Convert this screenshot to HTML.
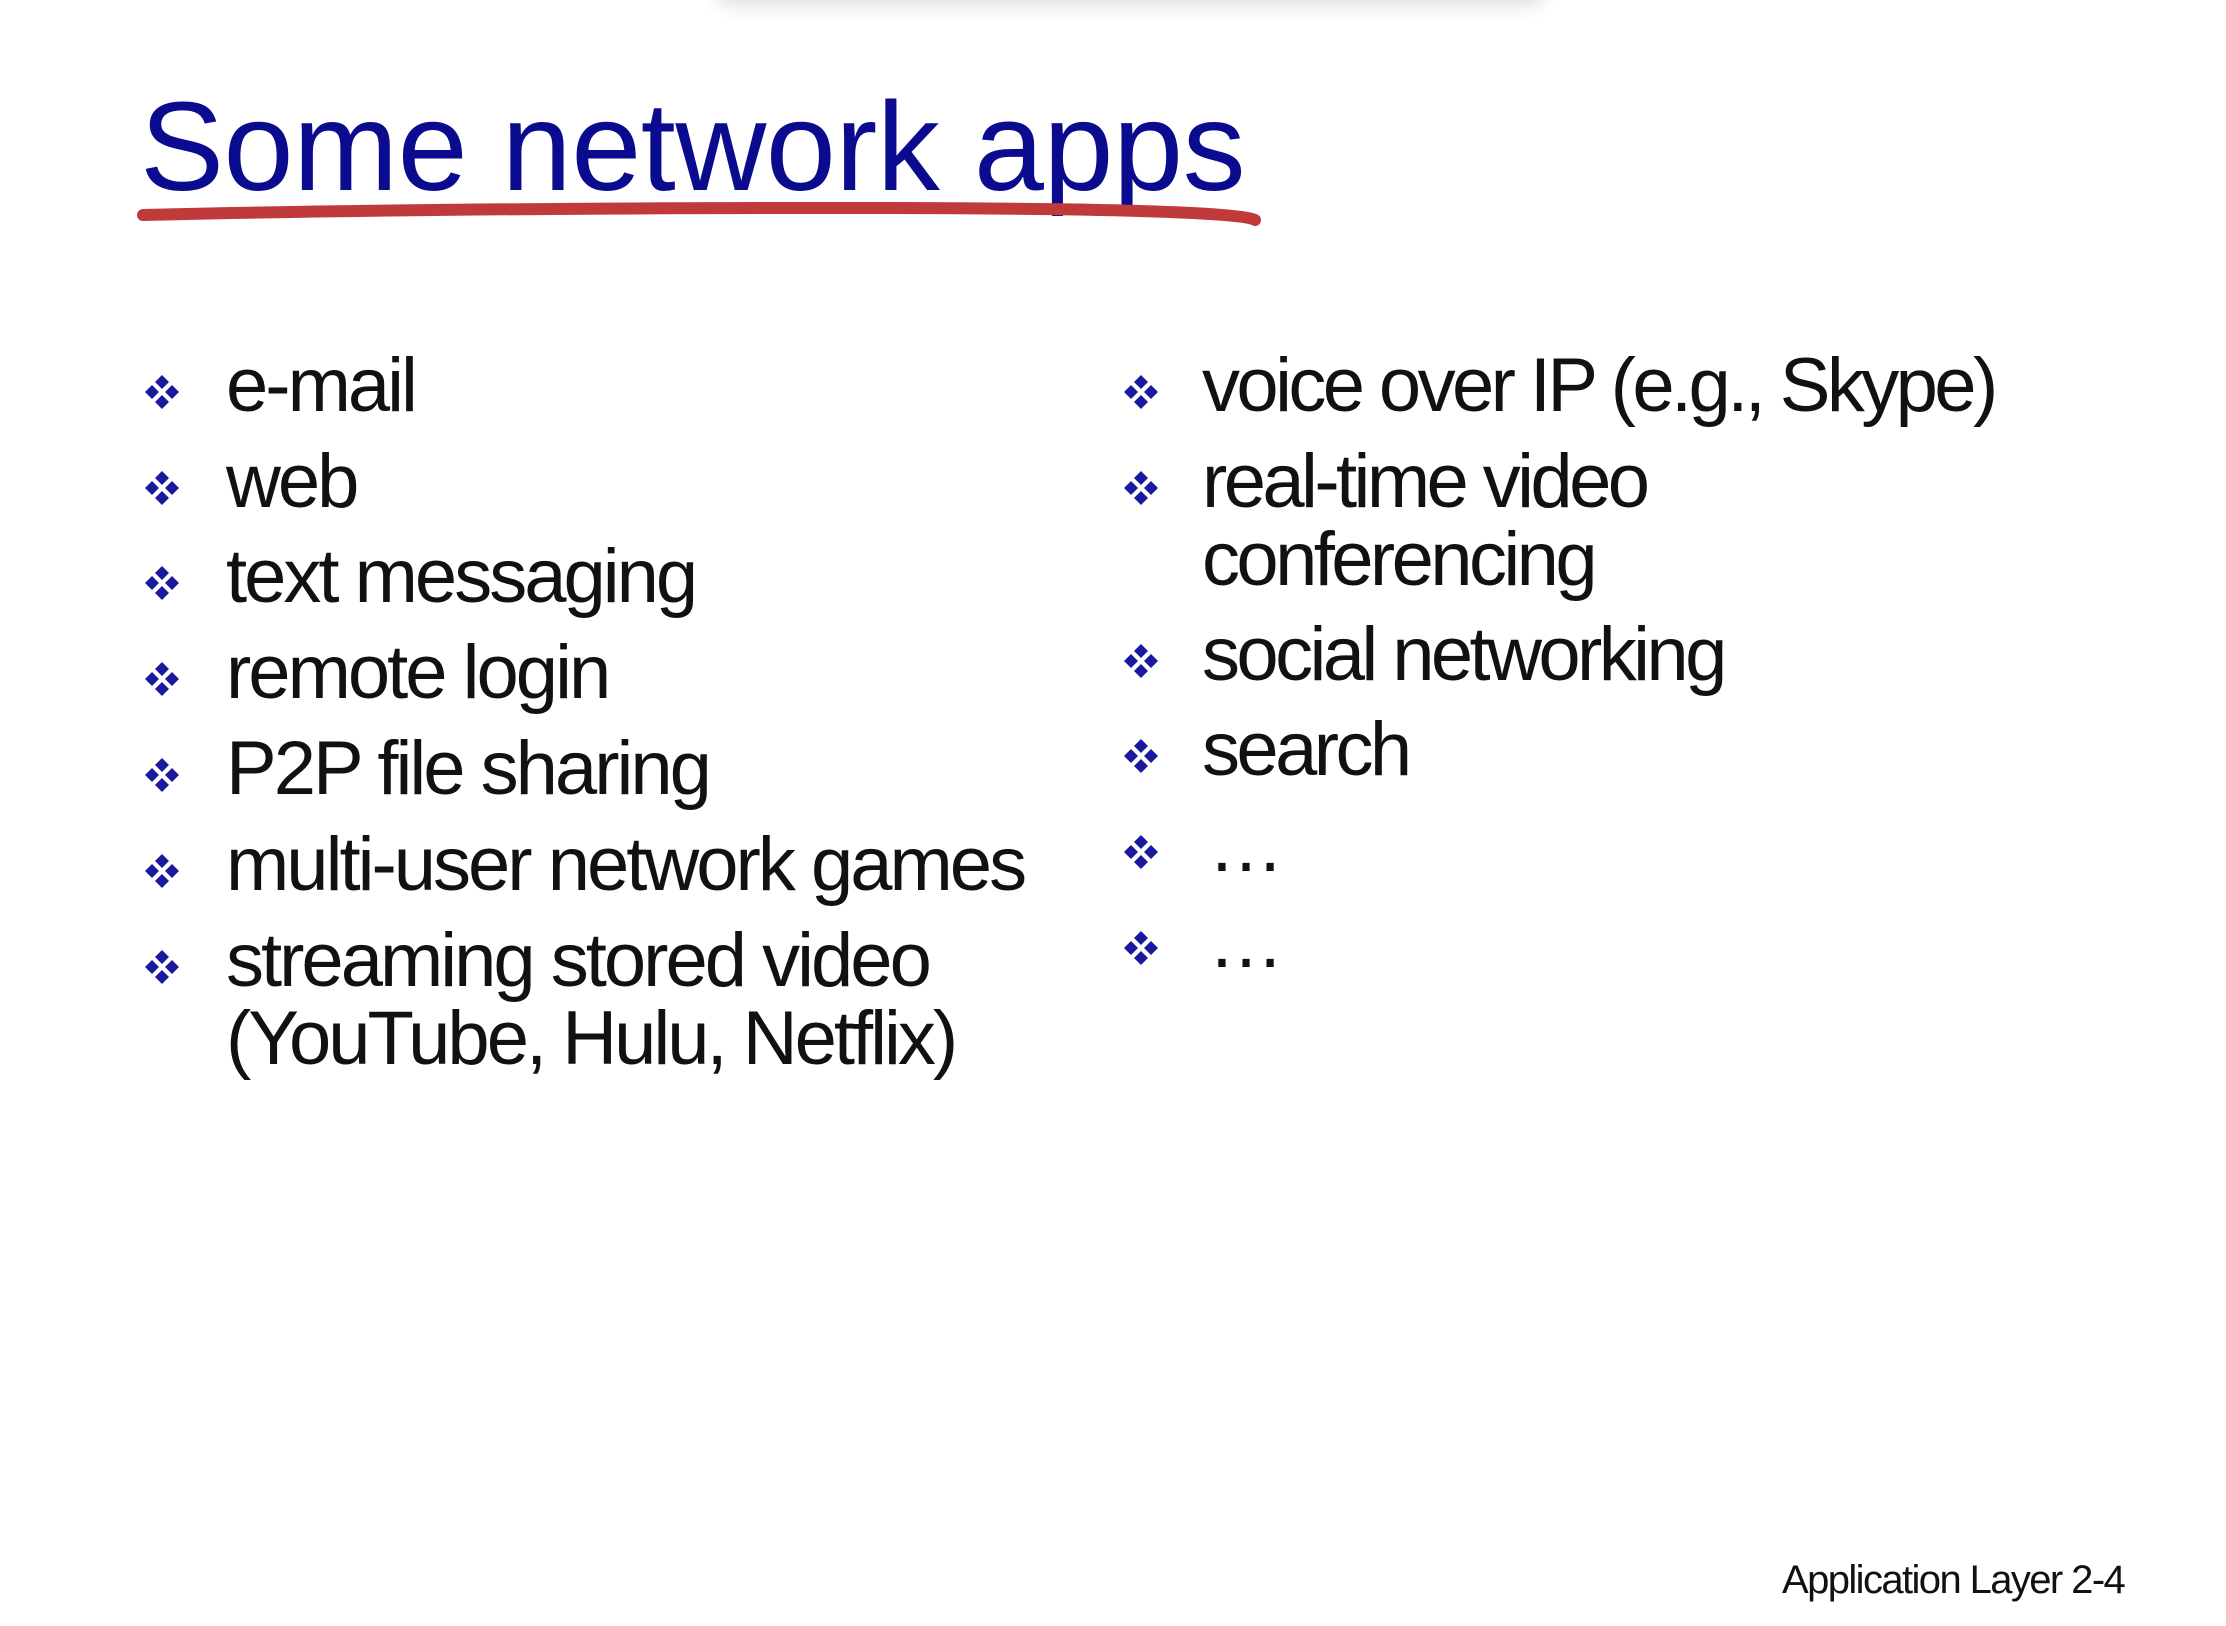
<!DOCTYPE html>
<html><head><meta charset="utf-8"><style>
body{margin:0;width:2226px;height:1626px;background:#fff;position:relative;overflow:hidden;font-family:"Liberation Sans",sans-serif}
.t{position:absolute;line-height:1;white-space:nowrap}
.b{font-size:76px;color:#111;letter-spacing:-3px}
.r{letter-spacing:-3.6px}
.bl{position:absolute;width:38px;height:38px}
</style></head><body>
<div style="position:absolute;left:715px;top:-30px;width:830px;height:30px;box-shadow:0 6px 18px rgba(0,0,0,0.12);border-radius:20px"></div>
<div class="t" style="left:140px;top:84px;font-size:126px;color:#0b0b8f;letter-spacing:-0.5px">Some network apps</div>
<svg style="position:absolute;left:135px;top:198px" width="1135" height="34"><path d="M8 17 Q300 10 700 10 T1120 22" stroke="#c0393b" stroke-width="12" fill="none" stroke-linecap="round"/></svg>
<svg width="0" height="0" style="position:absolute"><defs><g id="d" fill="#1a1aa0"><path d="M19 2l7 7-7 7-7-7z"/><path d="M19 22l7 7-7 7-7-7z"/><path d="M9 12l7 7-7 7-7-7z"/><path d="M29 12l7 7-7 7-7-7z"/></g></defs></svg>

<svg class="bl" style="left:143px;top:373px"><use href="#d"/></svg><div class="t b" style="left:226px;top:348px">e-mail</div>
<svg class="bl" style="left:143px;top:469px"><use href="#d"/></svg><div class="t b" style="left:226px;top:444px">web</div>
<svg class="bl" style="left:143px;top:564px"><use href="#d"/></svg><div class="t b" style="left:226px;top:539px">text messaging</div>
<svg class="bl" style="left:143px;top:660px"><use href="#d"/></svg><div class="t b" style="left:226px;top:635px">remote login</div>
<svg class="bl" style="left:143px;top:756px"><use href="#d"/></svg><div class="t b" style="left:226px;top:731px">P2P file sharing</div>
<svg class="bl" style="left:143px;top:852px"><use href="#d"/></svg><div class="t b" style="left:226px;top:827px">multi-user network games</div>
<svg class="bl" style="left:143px;top:948px"><use href="#d"/></svg><div class="t b" style="left:226px;top:923px">streaming stored video</div>
<div class="t b" style="left:226px;top:1001px">(YouTube, Hulu, Netflix)</div>

<svg class="bl" style="left:1122px;top:373px"><use href="#d"/></svg><div class="t b r" style="left:1202px;top:348px">voice over IP (e.g., Skype)</div>
<svg class="bl" style="left:1122px;top:469px"><use href="#d"/></svg><div class="t b r" style="left:1202px;top:444px">real-time video</div>
<div class="t b r" style="left:1202px;top:522px">conferencing</div>
<svg class="bl" style="left:1122px;top:642px"><use href="#d"/></svg><div class="t b r" style="left:1202px;top:617px">social networking</div>
<svg class="bl" style="left:1122px;top:737px"><use href="#d"/></svg><div class="t b r" style="left:1202px;top:712px">search</div>
<svg class="bl" style="left:1122px;top:833px"><use href="#d"/></svg><div class="t b" style="left:1208px;top:808px;letter-spacing:6px">…</div>
<svg class="bl" style="left:1122px;top:929px"><use href="#d"/></svg><div class="t b" style="left:1208px;top:904px;letter-spacing:6px">…</div>

<div class="t" style="left:1782px;top:1560px;font-size:40px;color:#111;letter-spacing:-1.6px">Application Layer 2-4</div>
</body></html>
